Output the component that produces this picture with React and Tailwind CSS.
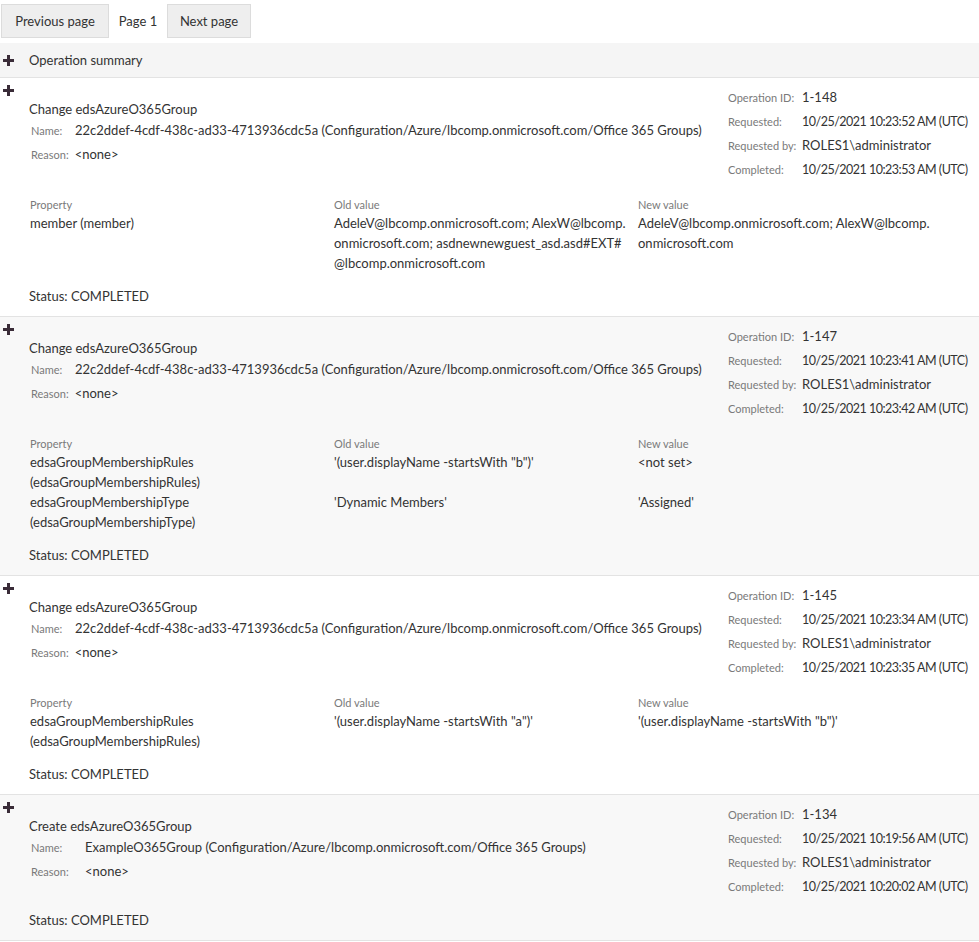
import React from 'react';

const Plus = () => (
  <svg width="11" height="11" viewBox="0 0 11 11" className="block">
    <path d="M4 0h3v4h4v3H7v4H4V7H0V4h4z" fill="#3a2c38" />
  </svg>
);

const operations = [
  {
    action: 'Change edsAzureO365Group',
    name: '22c2ddef-4cdf-438c-ad33-4713936cdc5a (Configuration/Azure/lbcomp.onmicrosoft.com/Office 365 Groups)',
    id: '1-148',
    requested: '10/25/2021 10:23:52 AM (UTC)',
    completed: '10/25/2021 10:23:53 AM (UTC)',
    shaded: false,
    changes: [
      {
        property: ['member (member)'],
        oldValue: ['AdeleV@lbcomp.onmicrosoft.com; AlexW@lbcomp.', 'onmicrosoft.com; asdnewnewguest_asd.asd#EXT#', '@lbcomp.onmicrosoft.com'],
        newValue: ['AdeleV@lbcomp.onmicrosoft.com; AlexW@lbcomp.', 'onmicrosoft.com'],
      },
    ],
  },
  {
    action: 'Change edsAzureO365Group',
    name: '22c2ddef-4cdf-438c-ad33-4713936cdc5a (Configuration/Azure/lbcomp.onmicrosoft.com/Office 365 Groups)',
    id: '1-147',
    requested: '10/25/2021 10:23:41 AM (UTC)',
    completed: '10/25/2021 10:23:42 AM (UTC)',
    shaded: true,
    changes: [
      {
        property: ['edsaGroupMembershipRules', '(edsaGroupMembershipRules)'],
        oldValue: ['\'(user.displayName -startsWith "b")\''],
        newValue: ['<not set>'],
      },
      {
        property: ['edsaGroupMembershipType', '(edsaGroupMembershipType)'],
        oldValue: ["'Dynamic Members'"],
        newValue: ["'Assigned'"],
      },
    ],
  },
  {
    action: 'Change edsAzureO365Group',
    name: '22c2ddef-4cdf-438c-ad33-4713936cdc5a (Configuration/Azure/lbcomp.onmicrosoft.com/Office 365 Groups)',
    id: '1-145',
    requested: '10/25/2021 10:23:34 AM (UTC)',
    completed: '10/25/2021 10:23:35 AM (UTC)',
    shaded: false,
    changes: [
      {
        property: ['edsaGroupMembershipRules', '(edsaGroupMembershipRules)'],
        oldValue: ['\'(user.displayName -startsWith "a")\''],
        newValue: ['\'(user.displayName -startsWith "b")\''],
      },
    ],
  },
  {
    action: 'Create edsAzureO365Group',
    name: 'ExampleO365Group (Configuration/Azure/lbcomp.onmicrosoft.com/Office 365 Groups)',
    id: '1-134',
    requested: '10/25/2021 10:19:56 AM (UTC)',
    completed: '10/25/2021 10:20:02 AM (UTC)',
    shaded: true,
    wideLabels: true,
    changes: [],
  },
];

const Lines = ({ lines }) => (
  <div>
    {lines.map((l, i) => (
      <div key={i} className="h-5 leading-5 whitespace-nowrap">{l}</div>
    ))}
  </div>
);

const InfoRow = ({ label, value, date }) => (
  <div className="flex h-6 items-center">
    <span className="w-[74px] shrink-0 whitespace-nowrap text-[11px] text-[#7a7a7a]">{label}</span>
    <span className={`whitespace-nowrap ${date ? 'text-[12.5px] tracking-[-0.5px]' : ''}`}>{value}</span>
  </div>
);

const Operation = ({ op }) => (
  <div className={`flex border-b border-[#e3e3e3] pt-1 pb-[10px] ${op.shaded ? 'bg-[#f8f8f8]' : 'bg-white'}`}>
    <div className="w-[728px] shrink-0">
      <div className="flex h-[17px] items-center pl-[3px]">
        <Plus />
      </div>
      <div className="pl-[29px]">
        <div className="h-5 leading-5">{op.action}</div>
        {op.wideLabels ? (
          <>
            <div className="flex h-6 items-center pl-[2px]">
              <span className="w-[54px] shrink-0 text-[11px] text-[#7a7a7a]">Name:</span>
              <span className="whitespace-nowrap">{op.name}</span>
            </div>
            <div className="flex h-6 items-center pl-[2px]">
              <span className="w-[54px] shrink-0 text-[11px] text-[#7a7a7a]">Reason:</span>
              <span>&lt;none&gt;</span>
            </div>
          </>
        ) : (
          <>
            <div className="flex h-6 items-center pl-[2px]">
              <span className="w-[44px] shrink-0 text-[11px] text-[#7a7a7a]">Name:</span>
              <span className="whitespace-nowrap">{op.name}</span>
            </div>
            <div className="flex h-6 items-center pl-[2px]">
              <span className="mr-[6px] text-[11px] text-[#7a7a7a]">Reason:</span>
              <span>&lt;none&gt;</span>
            </div>
          </>
        )}
        {op.changes.length > 0 && (
          <div className="mt-[30px] pl-px">
            <div className="grid grid-cols-[304px_304px_304px] text-[11px] leading-4 text-[#7a7a7a]">
              <div>Property</div>
              <div>Old value</div>
              <div>New value</div>
            </div>
            {op.changes.map((c, i) => (
              <div key={i} className="grid grid-cols-[304px_304px_304px]">
                <Lines lines={c.property} />
                <Lines lines={c.oldValue} />
                <Lines lines={c.newValue} />
              </div>
            ))}
          </div>
        )}
        <div className={`h-5 leading-5 ${op.changes.length > 0 ? 'mt-[13px]' : 'mt-[26px]'}`}>Status: COMPLETED</div>
      </div>
    </div>
    <div className="mt-1 w-[251px] shrink-0">
      <InfoRow label="Operation ID:" value={op.id} />
      <InfoRow label="Requested:" value={op.requested} date />
      <InfoRow label="Requested by:" value="ROLES1\administrator" />
      <InfoRow label="Completed:" value={op.completed} date />
    </div>
  </div>
);

export default function App() {
  return (
    <div className="min-h-screen overflow-hidden bg-white text-[13px] text-[#333333]" style={{ fontFamily: 'Lato, "Noto Sans", sans-serif' }}>
      <div className="flex items-center pt-1">
        <button className="ml-px h-[34px] w-[108px] border border-[#dcdcdc] bg-[#eeeeee] pt-px text-[#333]">Previous page</button>
        <span className="w-[58px] pt-px text-center">Page 1</span>
        <button className="h-[34px] w-[84px] border border-[#dcdcdc] bg-[#eeeeee] pt-px text-[#333]">Next page</button>
      </div>
      <div className="mt-[5px] flex h-[35px] items-center border-b border-[#e3e3e3] bg-[#f5f5f5]">
        <span className="w-[29px] pl-[3px]"><Plus /></span>
        <span className="pt-px">Operation summary</span>
      </div>
      {operations.map((op) => (
        <Operation key={op.id} op={op} />
      ))}
    </div>
  );
}
